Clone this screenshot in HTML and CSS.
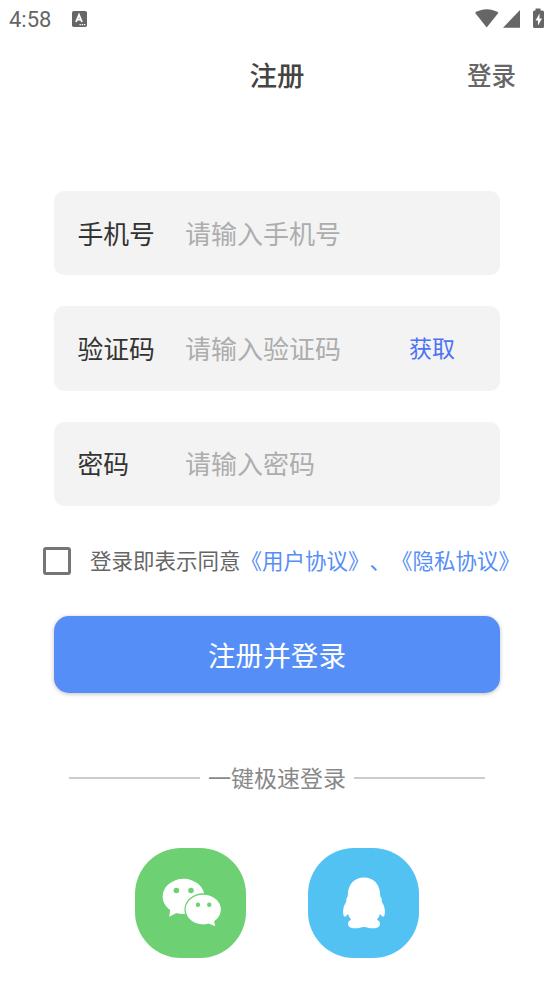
FILE: index.html
```html
<!DOCTYPE html>
<html lang="zh-CN">
<head>
<meta charset="utf-8">
<title>注册</title>
<link rel="stylesheet" href="styles.css">
</head>
<body>
<div class="status">
  <span class="time">4:58</span>
  <svg class="app-badge" width="15" height="16" viewBox="0 0 15 16"><rect width="15" height="16" rx="1.8" fill="#666"/><path d="M4 11 7 3.8 10 11M5 8.7h4" fill="none" stroke="#fff" stroke-width="1.8"/><path d="M7.5 13.7h6" stroke="#fff" stroke-width="1.2" stroke-dasharray="1.4 .8"/></svg>
  <svg class="signals" width="70" height="20" viewBox="0 0 70 20" fill="#666"><path d="M0 3.800C6.500-1.100 17-1.100 23.500 3.800L11.700 18.500Z"/><path d="M45 1v17.700H28Z"/><path d="M60.500-.5h5v2h2q1.500 0 1.500 1.500v14.500q0 1.500-1.500 1.500h-8q-1.500 0-1.500-1.500v-14.500Q58 1.500 59.500 1.500h1Z"/><path d="M64.500 4.500 60.500 11.500h2.500v5l4-7h-2.500Z" fill="#fff"/></svg>
</div>
<header class="header">
  <h1 class="title">注册</h1>
  <a class="login">登录</a>
</header>
<main class="form">
  <label class="field"><span class="label">手机号</span><input class="input" placeholder="请输入手机号"></label>
  <label class="field"><span class="label">验证码</span><input class="input" placeholder="请输入验证码"><span class="fetch">获取</span></label>
  <label class="field"><span class="label">密码</span><input class="input" placeholder="请输入密码"></label>
</main>
<div class="agree">
  <span class="checkbox"></span>
  <span class="agree-text">登录即表示同意<span class="link">《用户协议》、《隐私协议》</span></span>
</div>
<button class="submit">注册并登录</button>
<div class="divider"><span class="divider-text">一键极速登录</span></div>
<div class="social">
  <svg class="social-icon wechat" viewBox="0 0 111 111">
    <g fill="#fff"><ellipse cx="48.500" cy="48.700" rx="21" ry="17.700"/><path d="M35.500 61 34 69l8-4 13 1.500V60Z"/></g>
    <g fill="#6dd174"><circle cx="41.300" cy="42.700" r="2.800"/><circle cx="56" cy="42.700" r="2.800"/></g>
    <ellipse cx="68.300" cy="61.800" rx="18.300" ry="15.600" fill="#fff" stroke="#6dd174" stroke-width="1.300"/>
    <path d="M79 72l1.300 6.700-7-3.200Z" fill="#fff"/>
    <g fill="#6dd174"><circle cx="63" cy="57" r="2.200"/><circle cx="74.300" cy="57" r="2.200"/></g>
  </svg>
  <svg class="social-icon qq" viewBox="0 0 111 111">
    <path fill="#fff" d="M56 29.700C46.500 29.700 39.500 36.500 39.700 48.200Q37.600 51 38.200 54C35.500 58 34.500 62 35.200 66.500Q35.600 69.200 37 69Q38.500 68.500 39.900 66Q40.800 69.500 43 72.200Q39.900 73.500 39.900 76C39.900 79.500 43.500 80.700 47.500 80.700C51 80.700 53 79.300 56 79.300C59 79.300 61 80.700 64.500 80.700C68.500 80.700 72.100 79.500 72.100 76Q72.100 73.500 69 72.200Q71.200 69.500 72.100 66Q73.500 68.500 75 69Q76.400 69.200 76.800 66.500C77.500 62 76.500 58 73.900 54Q74.400 51 72.300 48.200C72.500 36.500 65.500 29.700 56 29.700Z"/>
  </svg>
</div>
</body>
</html>
```
FILE: styles.css
```css
* { box-sizing: border-box; }
body {
  margin: 0;
  height: 984px;
  background: #fff;
  font-family: "Noto Sans CJK SC", sans-serif;
  text-spacing-trim: space-all;
  overflow: hidden;
}
.status {
  display: flex;
  align-items: center;
  height: 38px;
  padding: 0 9px;
}
.time {
  width: 63px;
  padding-top: 1px;
  font: 22px/38px Roboto, sans-serif;
  color: #666;
}
.signals {
  margin-left: auto;
  overflow: visible;
}
.header {
  display: grid;
  grid-template-columns: 1fr auto 1fr;
  align-items: center;
  height: 74px;
  padding: 0 38px 2px;
}
.title {
  grid-column: 2;
  margin: 0;
  font-size: 27.500px;
  font-weight: 500;
  color: #444;
}
.login {
  justify-self: end;
  font-size: 24.500px;
  font-weight: 500;
  color: #666;
}
.form {
  display: flex;
  flex-direction: column;
  gap: 31px;
  margin: 79px 54px 0;
}
.field {
  display: flex;
  align-items: center;
  height: 84.300px;
  padding: 0 45px 1.500px 23.500px;
  border-radius: 10px;
  background: #f3f3f3;
}
.label {
  width: 107.500px;
  font-size: 25.800px;
  color: #333;
}
.input {
  flex: 1;
  min-width: 0;
  padding: 0;
  border: 0;
  background: none;
  font: 26px "Noto Sans CJK SC", sans-serif;
}
.input::placeholder { color: #adadad; }
.fetch {
  padding-bottom: 1px;
  font-size: 23px;
  color: #4c72f5;
}
.agree {
  display: flex;
  align-items: center;
  height: 32px;
  margin: 38.700px 0 0 43px;
}
.checkbox {
  width: 28px;
  height: 28px;
  margin-right: 19px;
  border: 3px solid #757575;
  border-radius: 3px;
}
.agree-text {
  padding-bottom: 2px;
  white-space: nowrap;
  font-size: 21.500px;
  color: #666;
}
.link { color: #558ef7; }
.submit {
  display: block;
  width: 446px;
  height: 76.500px;
  margin: 39.500px 54px 0;
  padding: 0;
  border: 0;
  border-radius: 15px;
  background: #558ef7;
  box-shadow: 0 1px 4px rgba(0, 0, 0, .25);
  color: #fff;
  font: 27.600px "Noto Sans CJK SC", sans-serif;
}
.divider {
  display: flex;
  align-items: center;
  gap: 8px;
  height: 40px;
  margin: 65px 69px 0;
}
.divider::before,
.divider::after {
  content: "";
  flex: 1;
  height: 2px;
  background: #ccc;
}
.divider-text {
  padding-bottom: 2px;
  font-size: 23px;
  color: #888;
}
.social {
  display: flex;
  justify-content: center;
  gap: 62px;
  margin-top: 50px;
}
.social-icon {
  width: 111px;
  height: 110.500px;
  border-radius: 46px;
}
.wechat { background: #6dd174; }
.qq { background: #52c2f3; }
```
